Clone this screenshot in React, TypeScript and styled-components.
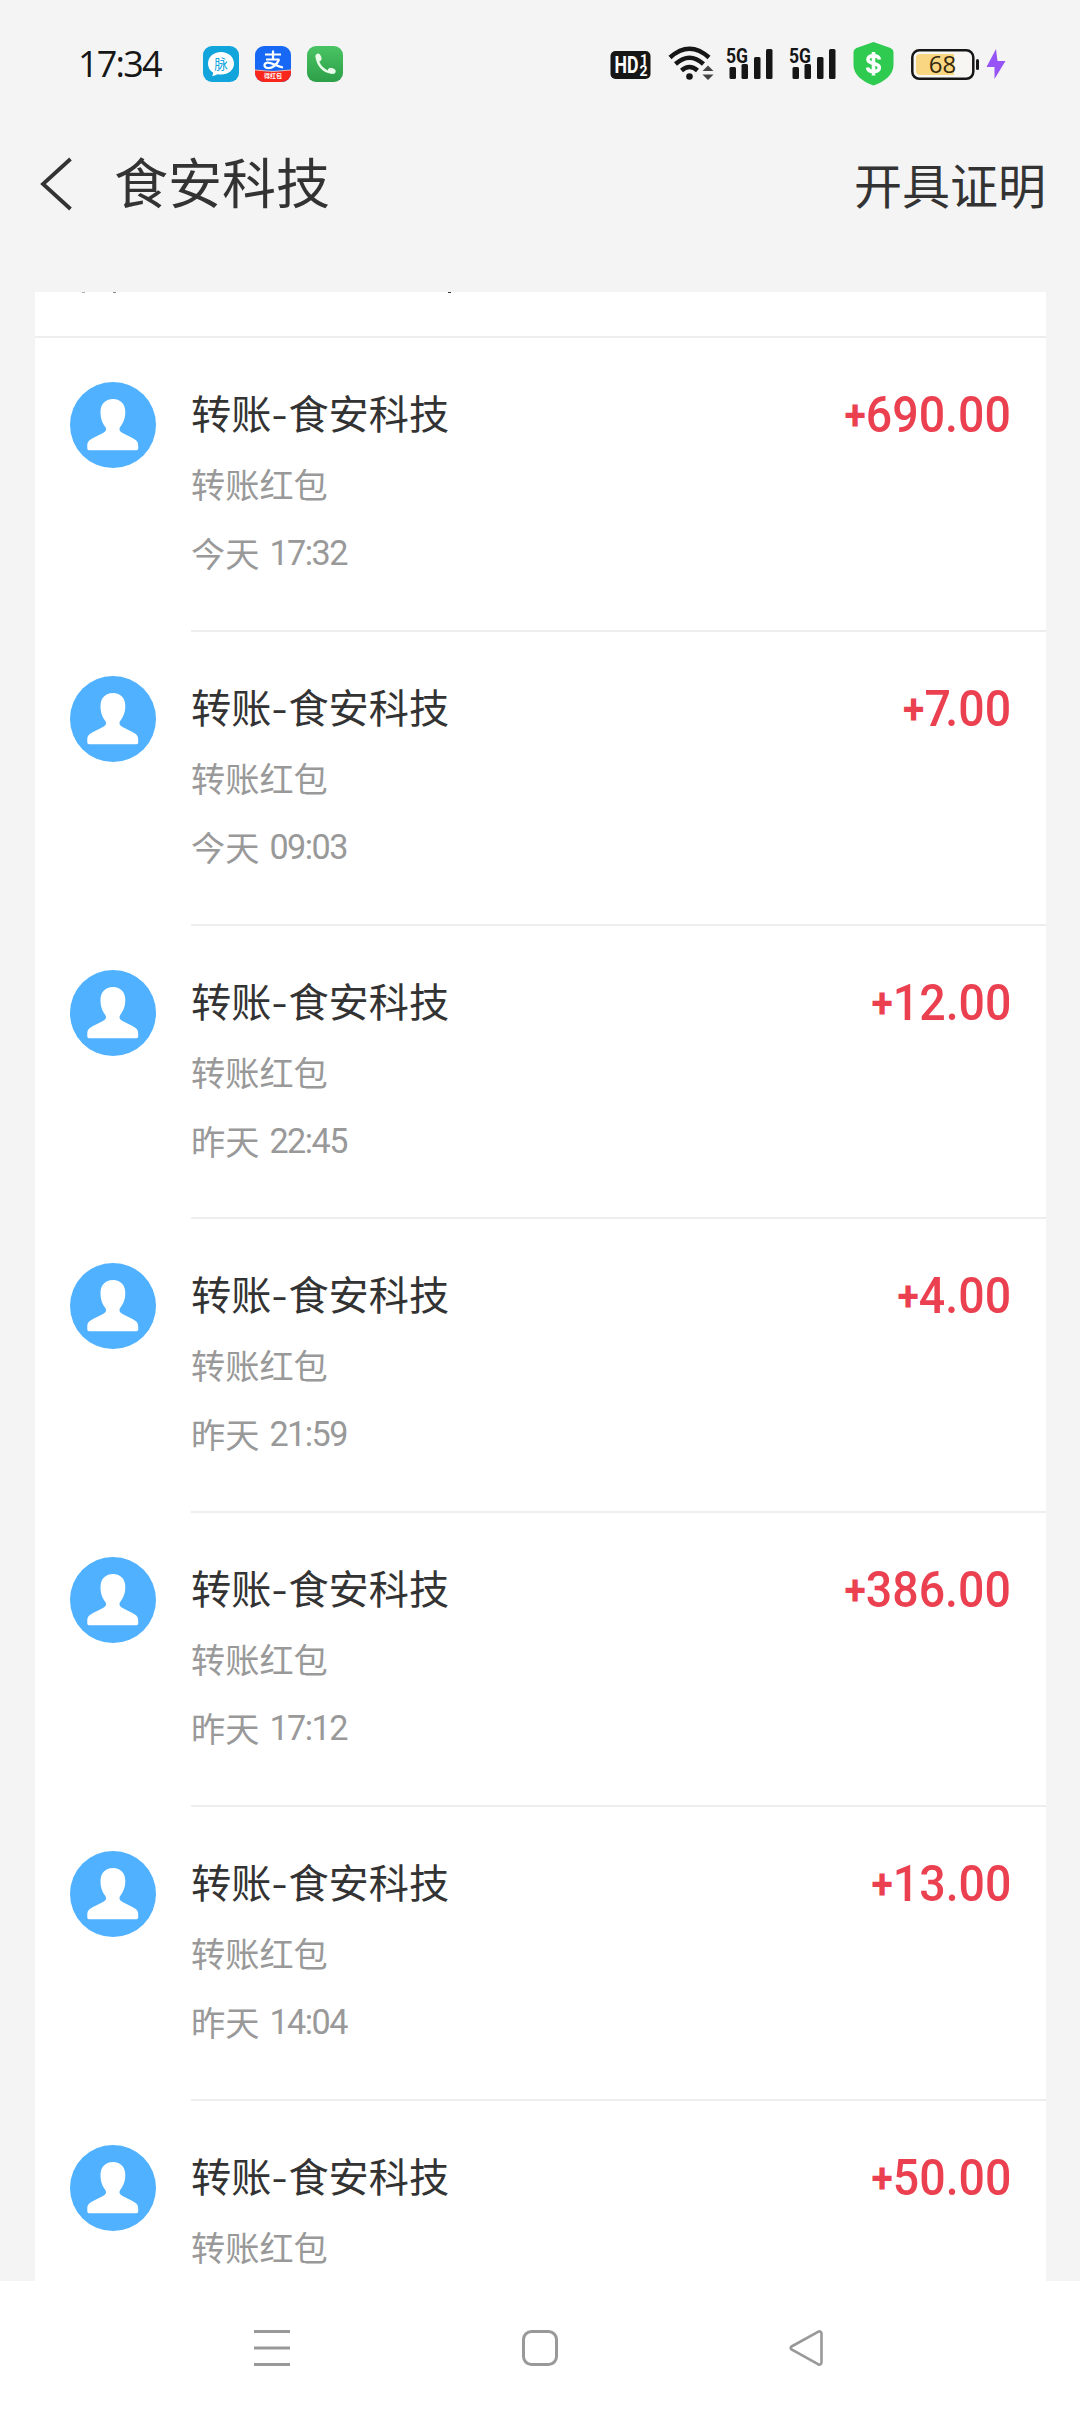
import React from "react";
import styled, { createGlobalStyle } from "styled-components";

const cjk = `"Noto Sans CJK SC", sans-serif`;

const Global = createGlobalStyle`
  * { box-sizing: border-box; }
  body { margin: 0; background: #f4f4f4; font-family: ${cjk}; }
`;

const Screen = styled.div`
  width: 1080px;
  height: 2414px;
  display: flex;
  flex-direction: column;
  overflow: hidden;
  background: #f4f4f4;
`;

const StatusBar = styled.div`
  height: 128px;
  flex: none;
  display: flex;
  justify-content: space-between;
  align-items: center;
  padding: 0 74px 0 78px;
`;

const StatusGroup = styled.div`
  display: flex;
  align-items: center;
  height: 128px;
`;

const Time = styled.span`
  width: 125px;
  font: 400 36px/44px "Open Sans", sans-serif;
  color: #161616;
  letter-spacing: -1.8px;
  white-space: nowrap;
`;

const AppIcon = styled.svg`
  width: 36px;
  height: 36px;
  margin-right: 16px;
  display: block;
`;

const StatusGlyph = styled.svg<{ $w: number; $gap?: number }>`
  width: ${(p) => p.$w}px;
  height: 48px;
  margin-left: ${(p) => p.$gap ?? 0}px;
  display: block;
`;

const Header = styled.header`
  height: 164px;
  flex: none;
  display: flex;
  align-items: flex-start;
  padding: 0 34px 0 40px;
`;

const BackIcon = styled.svg`
  width: 32px;
  height: 54px;
  margin: 29px 42px 0 0;
`;

const Title = styled.h1`
  flex: 1;
  margin: 13px 0 0;
  font: 400 54px/80px ${cjk};
  color: #333;
`;

const HeaderAction = styled.span`
  margin-top: 20px;
  font: 400 48px/70px ${cjk};
  color: #333;
`;

const Card = styled.main`
  height: 1989px;
  flex: none;
  margin: 0 34px 0 35px;
  background: #fff;
  overflow: hidden;
`;

const SummaryStrip = styled.div`
  height: 46px;
  display: flex;
  align-items: flex-start;
  border-bottom: 2px solid #eee;
`;

const Tick = styled.span<{ $before: number; $tone: string }>`
  width: 3px;
  height: 1px;
  margin-left: ${(p) => p.$before}px;
  background: ${(p) => p.$tone};
`;

const Row = styled.section`
  height: 293.8px;
  display: flex;
  padding-left: 35px;
`;

const Avatar = styled.svg`
  width: 86px;
  height: 86px;
  margin: 44px 35px 0 0;
  flex: none;
`;

const RowBody = styled.div`
  flex: 1;
  display: flex;
  justify-content: space-between;
  align-items: flex-start;
  padding: 44px 35px 0 0;
  border-bottom: 2px solid #eee;
`;

const Details = styled.div`
  display: flex;
  flex-direction: column;
`;

const RowTitle = styled.div`
  font: 400 40.2px/60px ${cjk};
  color: #333;
`;

const Dash = styled.span`
  display: inline-block;
  width: 17px;
  text-align: center;
  transform: scaleX(1.15);
`;

const Note = styled.div`
  margin-top: 16px;
  font: 400 34.2px/50px ${cjk};
  color: #999;
`;

const When = styled(Note)`
  margin-top: 19px;
  display: flex;
`;

const Clock = styled.span`
  margin: 1px 0 0 10px;
  font-family: Roboto, sans-serif;
  letter-spacing: -1.5px;
`;

const Amount = styled.div`
  display: flex;
  margin-top: 3px;
  font: 500 50px/60px Roboto, sans-serif;
  color: #eb4050;
  transform: scaleX(0.93);
  transform-origin: right center;
`;

const Sign = styled.span`
  font-size: 42px;
  font-weight: 700;
  padding-top: 1px;
`;

const Lead = styled.span<{ $tight: boolean }>`
  margin-right: ${(p) => (p.$tight ? -6 : 0)}px;
`;

const NavBar = styled.nav`
  flex: 1;
  display: flex;
  justify-content: space-between;
  align-items: center;
  background: #fff;
  padding: 0 255px 0 254px;
`;

const NavIcon = styled.svg`
  width: 36px;
  height: 38px;
`;

const records = [
  { when: "今天", clock: "17:32", amount: "690.00" },
  { when: "今天", clock: "09:03", amount: "7.00" },
  { when: "昨天", clock: "22:45", amount: "12.00" },
  { when: "昨天", clock: "21:59", amount: "4.00" },
  { when: "昨天", clock: "17:12", amount: "386.00" },
  { when: "昨天", clock: "14:04", amount: "13.00" },
  { when: "", clock: "", amount: "50.00" },
];

const Signal = ({ gap }: { gap: number }) => (
  <StatusGlyph $w={48} $gap={gap} viewBox="0 0 48 48">
    <text x="0" y="22.500" fontFamily="Roboto, sans-serif" fontWeight="700" fontSize="21" textLength="22" lengthAdjust="spacingAndGlyphs" fill="#161616">5G</text>
    <g fill="#161616">
      <rect x="3.500" y="27" width="6.500" height="12" rx="1.500" />
      <rect x="15.500" y="24" width="6.500" height="15" rx="1.500" />
      <rect x="28" y="17" width="6.500" height="22" rx="1.500" />
      <rect x="40" y="9" width="6.500" height="30" rx="1.500" />
    </g>
  </StatusGlyph>
);

const Person = () => (
  <Avatar viewBox="0 0 86 86">
    <circle cx="43" cy="43" r="43" fill="#4fb1ff" />
    <path fill="#fff" d="M43 17C35 17 30.500 22.500 30.500 30C30.500 37 32.500 41 35 44.500C37 47.500 36 49.500 32 51.500L23 56C18.500 58.500 17.300 60 17.300 64V66.500Q17.300 68.300 19 68.300H66.500Q68.200 68.300 68.200 66.500V64C68.200 60 67 58.500 62.500 56L53.500 51.500C49.500 49.500 48.500 47.500 50.500 44.500C53 41 55.300 37 55.300 30C55.300 22.500 51 17 43 17Z" />
  </Avatar>
);

export default function App() {
  return (
    <Screen>
      <Global />
      <StatusBar>
        <StatusGroup>
          <Time>17:34</Time>
          <AppIcon viewBox="0 0 36 36">
            <rect width="36" height="36" rx="9" fill="#12a5dc" />
            <path fill="#fff" d="M18 6C25.500 6 31 11 31 17.500S25.500 28.500 18 28.500Q16 28.500 14.500 28.200Q12 30 9 30Q10.500 28 10 26.500Q5 23.500 5 17.500C5 11 10.500 6 18 6Z" />
            <text x="18" y="22.500" textAnchor="middle" fontFamily="Noto Sans CJK SC" fontSize="13.500" fill="#12a5dc">脉</text>
          </AppIcon>
          <AppIcon viewBox="0 0 36 36">
            <defs>
              <clipPath id="payClip"><rect width="36" height="36" rx="9" /></clipPath>
            </defs>
            <g clipPath="url(#payClip)">
              <rect width="36" height="36" fill="#1668f5" />
              <path d="M0 24Q18 27 36 24V36H0Z" fill="#f9261b" />
              <path d="M0 24Q18 27 36 24" fill="none" stroke="#ffb59a" strokeWidth="1" />
            </g>
            <g fill="none" stroke="#fff" strokeWidth="2.200">
              <path d="M10 8.500H26M18 4.500V13M11 13.500H24.500" />
              <path d="M24 13.500C22 19 17 22.500 12.500 22C8.500 21.500 8.500 17 12.500 16.600C17 16.300 21 20.500 28 21.500" />
            </g>
            <text x="18" y="32" textAnchor="middle" fontFamily="Noto Sans CJK SC" fontWeight="700" fontSize="6" fill="#fff">得红包</text>
          </AppIcon>
          <AppIcon viewBox="0 0 36 36">
            <defs>
              <linearGradient id="phoneFill" x1="0" y1="0" x2="0" y2="1">
                <stop offset="0" stopColor="#49c463" />
                <stop offset="1" stopColor="#2d9f49" />
              </linearGradient>
            </defs>
            <rect width="36" height="36" rx="9" fill="url(#phoneFill)" />
            <path d="M10 11C10.500 19 17 26 25 26.500" fill="none" stroke="#eafbea" strokeWidth="2.600" />
            <ellipse cx="11.500" cy="11.500" rx="2.800" ry="4" transform="rotate(-20 11.500 11.500)" fill="#eafbea" />
            <ellipse cx="24.800" cy="24.800" rx="4" ry="2.800" transform="rotate(20 24.800 24.800)" fill="#eafbea" />
          </AppIcon>
        </StatusGroup>
        <StatusGroup>
          <StatusGlyph $w={41} viewBox="0 0 41 48">
            <rect x="0.500" y="11" width="40" height="28" rx="5" fill="#161616" />
            <g fill="#fff" fontFamily="Roboto, sans-serif" fontWeight="700">
              <text x="4.500" y="33" fontSize="23" textLength="24" lengthAdjust="spacingAndGlyphs">HD</text>
              <text x="30" y="24.500" fontSize="14">1</text>
              <text x="29.500" y="35.500" fontSize="14">2</text>
            </g>
          </StatusGlyph>
          <StatusGlyph $w={46} $gap={17} viewBox="0 0 46 48">
            <g fill="none" stroke="#161616" strokeWidth="4.500">
              <path d="M2 17.500Q21.500 0 41 17.500" />
              <path d="M7.500 24Q21.500 11.500 35.500 24" />
              <path d="M13.500 30.500Q21.500 23.500 29.500 30.500" />
            </g>
            <circle cx="21.500" cy="36.500" r="3.300" fill="#161616" />
            <path d="M34.500 31L40 25.500L45.500 31ZM34.500 34.500L40 40L45.500 34.500Z" fill="#444" />
          </StatusGlyph>
          <Signal gap={12} />
          <Signal gap={15} />
          <StatusGlyph $w={41} $gap={16} viewBox="0 0 41 48">
            <path d="M20.500 2L37.500 8Q40.500 9.300 40.500 12V25C40.500 35 31 42 20.500 45.500C10 42 0.500 35 0.500 25V12Q0.500 9.300 3.500 8Z" fill="#2fca50" />
            <path d="M26.500 19.500C26 17 24 15.700 20.500 15.700C17 15.700 15 17 15 19.500C15 25 26.300 22 26.300 27.500C26.300 30 24 31.500 20.500 31.500C17 31.500 14.800 30 14.500 27.500M20.500 12V35.500" fill="none" stroke="#fff" strokeWidth="3.600" />
          </StatusGlyph>
          <StatusGlyph $w={68} $gap={17} viewBox="0 0 68 48">
            <rect x="1.300" y="10.300" width="61" height="28.500" rx="7" fill="#f7f6f2" stroke="#161616" strokeWidth="2.500" />
            <path d="M9 14H43V35H9Q5 35 5 31V18Q5 14 9 14Z" fill="#f8d682" />
            <rect x="65" y="19" width="3" height="11" rx="1.500" fill="#161616" />
            <text x="31.500" y="33" textAnchor="middle" fontFamily="Open Sans, sans-serif" fontSize="24" fill="#33270f">68</text>
          </StatusGlyph>
          <StatusGlyph $w={20} $gap={7} viewBox="0 0 20 48">
            <path d="M10 9L0.500 27H8.500V39L19.500 21H11.500Z" fill="#9654f7" />
          </StatusGlyph>
        </StatusGroup>
      </StatusBar>
      <Header>
        <BackIcon viewBox="0 0 32 54">
          <path d="M30.500 2L3 27L30.500 52" fill="none" stroke="#333" strokeWidth="3.800" />
        </BackIcon>
        <Title>食安科技</Title>
        <HeaderAction>开具证明</HeaderAction>
      </Header>
      <Card>
        <SummaryStrip>
          <Tick $before={47} $tone="#aaa" />
          <Tick $before={28} $tone="#888" />
          <Tick $before={332} $tone="#333" />
        </SummaryStrip>
        {records.map((r) => (
          <Row key={r.when + r.clock}>
            <Person />
            <RowBody>
              <Details>
                <RowTitle>转账<Dash>-</Dash>食安科技</RowTitle>
                <Note>转账红包</Note>
                {r.when && <When>{r.when}<Clock>{r.clock}</Clock></When>}
              </Details>
              <Amount>
                <Sign>+</Sign>
                <Lead $tight={r.amount.startsWith("7.")}>{r.amount.split(".")[0]}</Lead>
                <span>.{r.amount.split(".")[1]}</span>
              </Amount>
            </RowBody>
          </Row>
        ))}
      </Card>
      <NavBar>
        <NavIcon viewBox="0 0 36 38">
          <path d="M0 2.500H36M0 19H36M0 35.500H36" stroke="#999" strokeWidth="3" />
        </NavIcon>
        <NavIcon viewBox="0 0 36 38">
          <rect x="1.500" y="2.500" width="33" height="33" rx="8" fill="none" stroke="#999" strokeWidth="3" />
        </NavIcon>
        <NavIcon viewBox="0 0 36 38">
          <path d="M2.500 17.500L29 2.800Q32 1.500 32.500 4.500V33.500Q32 36.500 29 35.200L2.500 20.500Q0.800 19 2.500 17.500Z" fill="none" stroke="#999" strokeWidth="2.600" />
        </NavIcon>
      </NavBar>
    </Screen>
  );
}
